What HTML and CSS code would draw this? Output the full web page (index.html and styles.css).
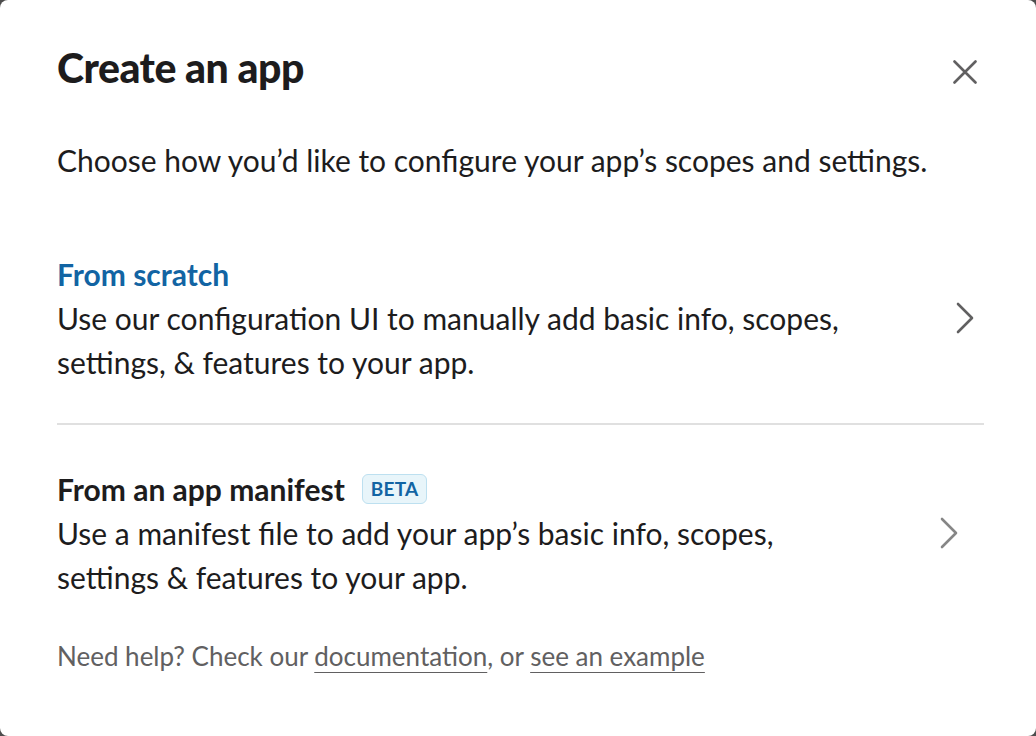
FILE: index.html
```html
<!DOCTYPE html>
<html>
<head>
<meta charset="utf-8">
<link rel="stylesheet" href="styles.css">
</head>
<body>
<div class="modal">
  <div class="header">
    <h1 class="title">Create an app</h1>
    <button class="close" aria-label="Close">
      <svg width="24" height="24" viewBox="0 0 24 24"><path d="M1.5 1.5 L22.5 22.5 M22.5 1.5 L1.5 22.5" stroke="#616061" stroke-width="2.6" stroke-linecap="round" fill="none"/></svg>
    </button>
  </div>
  <p class="subtitle">Choose how you’d like to configure your app’s scopes and settings.</p>
  <div class="option option-first">
    <div class="option-text">
      <div class="option-title blue">From scratch</div>
      <div class="option-desc">Use our configuration UI to manually add basic info, scopes,<br>settings, &amp; features to your app.</div>
    </div>
    <svg class="chev chev-dark" width="18" height="32" viewBox="0 0 18 32"><path d="M2 2 L16 16 L2 30" stroke="#616061" stroke-width="2.6" stroke-linecap="round" stroke-linejoin="round" fill="none"/></svg>
  </div>
  <div class="divider"></div>
  <div class="option option-second">
    <div class="option-text">
      <div class="option-title">From an app manifest <span class="badge">BETA</span></div>
      <div class="option-desc">Use a manifest file to add your app’s basic info, scopes,<br>settings &amp; features to your app.</div>
    </div>
    <svg class="chev chev-light" width="18" height="32" viewBox="0 0 18 32"><path d="M2 2 L16 16 L2 30" stroke="#868686" stroke-width="2.6" stroke-linecap="round" stroke-linejoin="round" fill="none"/></svg>
  </div>
  <p class="help">Need help? Check our <a href="#">documentation</a>, or <a href="#">see an example</a></p>
</div>
</body>
</html>
```
FILE: styles.css
```css
html, body {
  margin: 0;
  padding: 0;
  background: #4d4d4d;
}
body {
  width: 1036px;
  height: 736px;
  overflow: hidden;
  font-family: Lato, "Noto Sans", sans-serif;
  color: #1d1c1d;
}
.modal {
  box-sizing: border-box;
  width: 1036px;
  height: 736px;
  background: #fff;
  border-radius: 8px;
  padding: 40px 52px 0 57px;
}
.header {
  display: flex;
  justify-content: space-between;
  align-items: center;
}
.title {
  margin: 0;
  font-size: 41px;
  font-weight: 900;
  letter-spacing: -0.5px;
  line-height: 56px;
}
.close {
  border: 0;
  background: none;
  padding: 0;
  margin-right: 7px;
  margin-top: 8px;
  width: 24px;
  height: 24px;
  display: flex;
}
.subtitle {
  margin: 44px 0 0;
  font-size: 30px;
  line-height: 40px;
}
.option {
  display: flex;
  justify-content: space-between;
  align-items: center;
}
.option-first {
  margin-top: 72px;
  padding-bottom: 39px;
}
.option-second {
  margin-top: 42px;
}
.option-title {
  font-size: 30px;
  font-weight: 700;
  line-height: 44px;
  display: flex;
  align-items: center;
}
.blue {
  color: #1264a3;
}
.option-desc {
  font-size: 30px;
  line-height: 44px;
}
.chev-dark {
  margin-right: 10px;
}
.chev-light {
  margin-right: 26px;
}
.divider {
  height: 2px;
  background: #e0e0e0;
}
.badge {
  margin-left: 17px;
  font-size: 19px;
  font-weight: 700;
  color: #1264a3;
  background: #e8f5fa;
  border: 1px solid #bde0f0;
  border-radius: 6px;
  padding: 0 8px;
  line-height: 28px;
  letter-spacing: 0.2px;
}
.help {
  margin: 41px 0 0;
  font-size: 26px;
  color: #616061;
  line-height: 32px;
}
.help a {
  color: #616061;
  text-decoration: underline;
  text-underline-offset: 6px;
  text-decoration-thickness: 1px;
}
```
